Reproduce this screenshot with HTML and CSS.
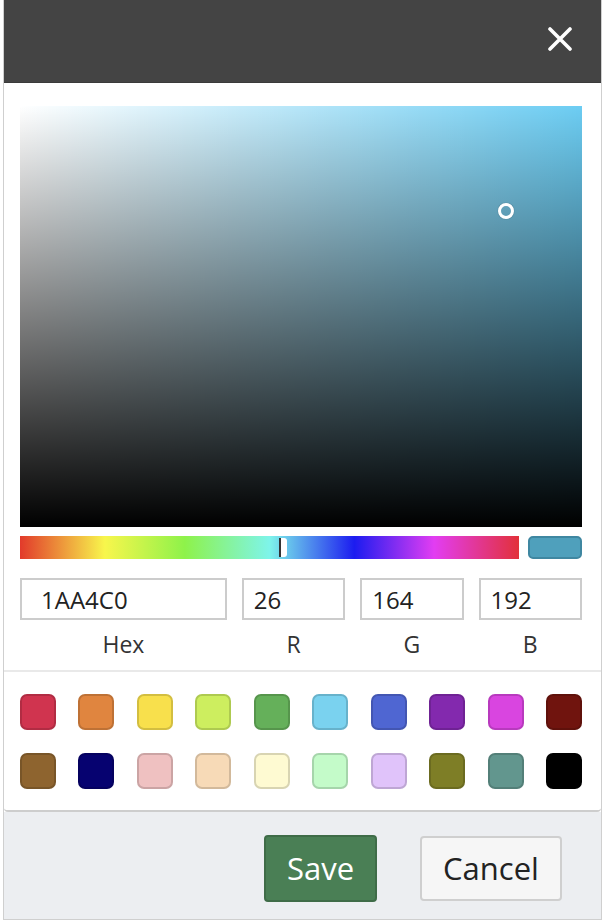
FILE: index.html
```html
<!DOCTYPE html>
<html>
<head>
<meta charset="utf-8">
<link rel="stylesheet" href="styles.css">
</head>
<body>
<div class="dialog">
  <div class="header">
    <button class="close" aria-label="Close">
      <svg width="24" height="24" viewBox="0 0 24 24"><path d="M2 2 L22 22 M22 2 L2 22" stroke="#fff" stroke-width="3.6" stroke-linecap="round" fill="none"/></svg>
    </button>
  </div>
  <div class="content">
    <div class="picker">
      <div class="sat">
        <span class="sat-handle"></span>
      </div>
      <div class="hue-row">
        <div class="hue"><span class="hue-thumb"></span></div>
        <div class="preview"></div>
      </div>
      <div class="fields">
        <div class="field"><input class="inp inp-hex" value="1AA4C0"><label>Hex</label></div>
        <div class="field"><input class="inp" value="26"><label>R</label></div>
        <div class="field"><input class="inp" value="164"><label>G</label></div>
        <div class="field"><input class="inp" value="192"><label>B</label></div>
      </div>
    </div>
    <div class="swatches">
      <div class="row">
        <span class="sw" style="background:#d0344f"></span>
        <span class="sw" style="background:#e0853f"></span>
        <span class="sw" style="background:#f8e04c"></span>
        <span class="sw" style="background:#cdee5f"></span>
        <span class="sw" style="background:#65b05a"></span>
        <span class="sw" style="background:#7ad2ef"></span>
        <span class="sw" style="background:#4f66d2"></span>
        <span class="sw" style="background:#8329ae"></span>
        <span class="sw" style="background:#d945e0"></span>
        <span class="sw" style="background:#70140e"></span>
      </div>
      <div class="row">
        <span class="sw" style="background:#8e642f"></span>
        <span class="sw" style="background:#060270"></span>
        <span class="sw" style="background:#efc1c1"></span>
        <span class="sw" style="background:#f7dab7"></span>
        <span class="sw" style="background:#fefad2"></span>
        <span class="sw" style="background:#c4fbc9"></span>
        <span class="sw" style="background:#e0c3fa"></span>
        <span class="sw" style="background:#7e7e26"></span>
        <span class="sw" style="background:#62968e"></span>
        <span class="sw" style="background:#000000"></span>
      </div>
    </div>
  </div>
  <div class="footer">
    <button class="btn btn-save">Save</button>
    <button class="btn btn-cancel">Cancel</button>
  </div>
</div>
</body>
</html>
```

FILE: styles.css
```css
* { box-sizing: border-box; }
html, body { margin: 0; padding: 0; background: #fff; }
body { font-family: "Open Sans", "Noto Sans", sans-serif; }

.dialog {
  margin-left: 3px;
  width: 599px;
  border-left: 1px solid #cfcfcf;
  border-right: 1px solid #cfcfcf;
  border-bottom: 1px solid #cfcfcf;
}

.header {
  height: 83px;
  background: #444;
  display: flex;
  justify-content: flex-end;
  align-items: flex-start;
  padding: 27px 29px 0 0;
  border-bottom: 1px solid #3a3a3a;
}
.close {
  background: none;
  border: 0;
  padding: 0;
  width: 24px;
  height: 24px;
  display: block;
}
.close svg { display: block; }

.content {
  background: #fff;
  border-bottom: 2px solid #cdcdcd;
  border-radius: 0 0 4px 4px;
}
.picker {
  padding: 23px 19px 0 16px;
  border-bottom: 2px solid #e9e9e9;
}
.sat {
  position: relative;
  height: 421px;
  background:
    linear-gradient(to bottom, rgba(0,0,0,0) 0%, #000 100%),
    linear-gradient(to right, #fff 0%, rgba(255,255,255,0) 100%),
    #6ccdf3;
}
.sat-handle {
  position: absolute;
  left: 478px;
  top: 97px;
  width: 16px;
  height: 16px;
  border: 3px solid #fff;
  border-radius: 50%;
  box-shadow: 0 0 1px rgba(0,0,0,0.5);
}
.hue-row {
  display: flex;
  gap: 9px;
  margin-top: 9px;
  height: 23px;
}
.hue {
  position: relative;
  flex: 1;
  background: linear-gradient(to right,
    #e23a2b 0%, #f8f64c 17%, #8ef24a 33%, #7ef4ea 50%,
    #1c1cf0 67%, #e23df2 83%, #e2313a 100%);
}
.hue-thumb {
  position: absolute;
  left: 259px;
  top: 2px;
  width: 8px;
  height: 19px;
  background: #fff;
  border-left: 2px solid #333;
  border-radius: 0 3px 3px 0;
}
.preview {
  width: 54px;
  background: #4fa0bc;
  border: 2px solid #3f87a1;
  border-radius: 5px;
}
.fields {
  display: grid;
  grid-template-columns: 2fr 1fr 1fr 1fr;
  column-gap: 15px;
  margin-top: 19px;
  padding-bottom: 11px;
}
.field { display: flex; flex-direction: column; }
.inp {
  height: 42px;
  width: 100%;
  border: 2px solid #cccccc;
  border-radius: 0;
  padding: 0 0 0 10px;
  font-family: "Open Sans", sans-serif;
  font-size: 24px;
  color: #222;
  background: #fff;
  outline: none;
}
.inp-hex { padding-left: 19px; }
.field label {
  text-align: center;
  margin-top: 9px;
  font-size: 23px;
  line-height: 30px;
  color: #333;
}

.swatches {
  padding: 22px 19px 21px 16px;
  display: flex;
  flex-direction: column;
  gap: 23px;
}
.row {
  display: flex;
  justify-content: space-between;
}
.sw {
  width: 36px;
  height: 36px;
  border-radius: 7px;
  border: 2px solid rgba(0,0,0,0.15);
}

.footer {
  background: #eceef1;
  height: 107px;
  display: flex;
  justify-content: flex-end;
  align-items: flex-start;
  gap: 43px;
  padding: 23px 39px 0 0;
}
.btn {
  font-family: "Open Sans", sans-serif;
  font-size: 31px;
  line-height: 1;
  cursor: pointer;
}
.btn-save {
  width: 113px;
  height: 67px;
  background: #4a7f55;
  color: #fff;
  border: 2px solid #3f6c48;
  border-radius: 4px;
}
.btn-cancel {
  width: 142px;
  height: 65px;
  margin-top: 1px;
  background: #f6f6f6;
  color: #222;
  border: 2px solid #cfcfcf;
  border-radius: 4px;
}
```
